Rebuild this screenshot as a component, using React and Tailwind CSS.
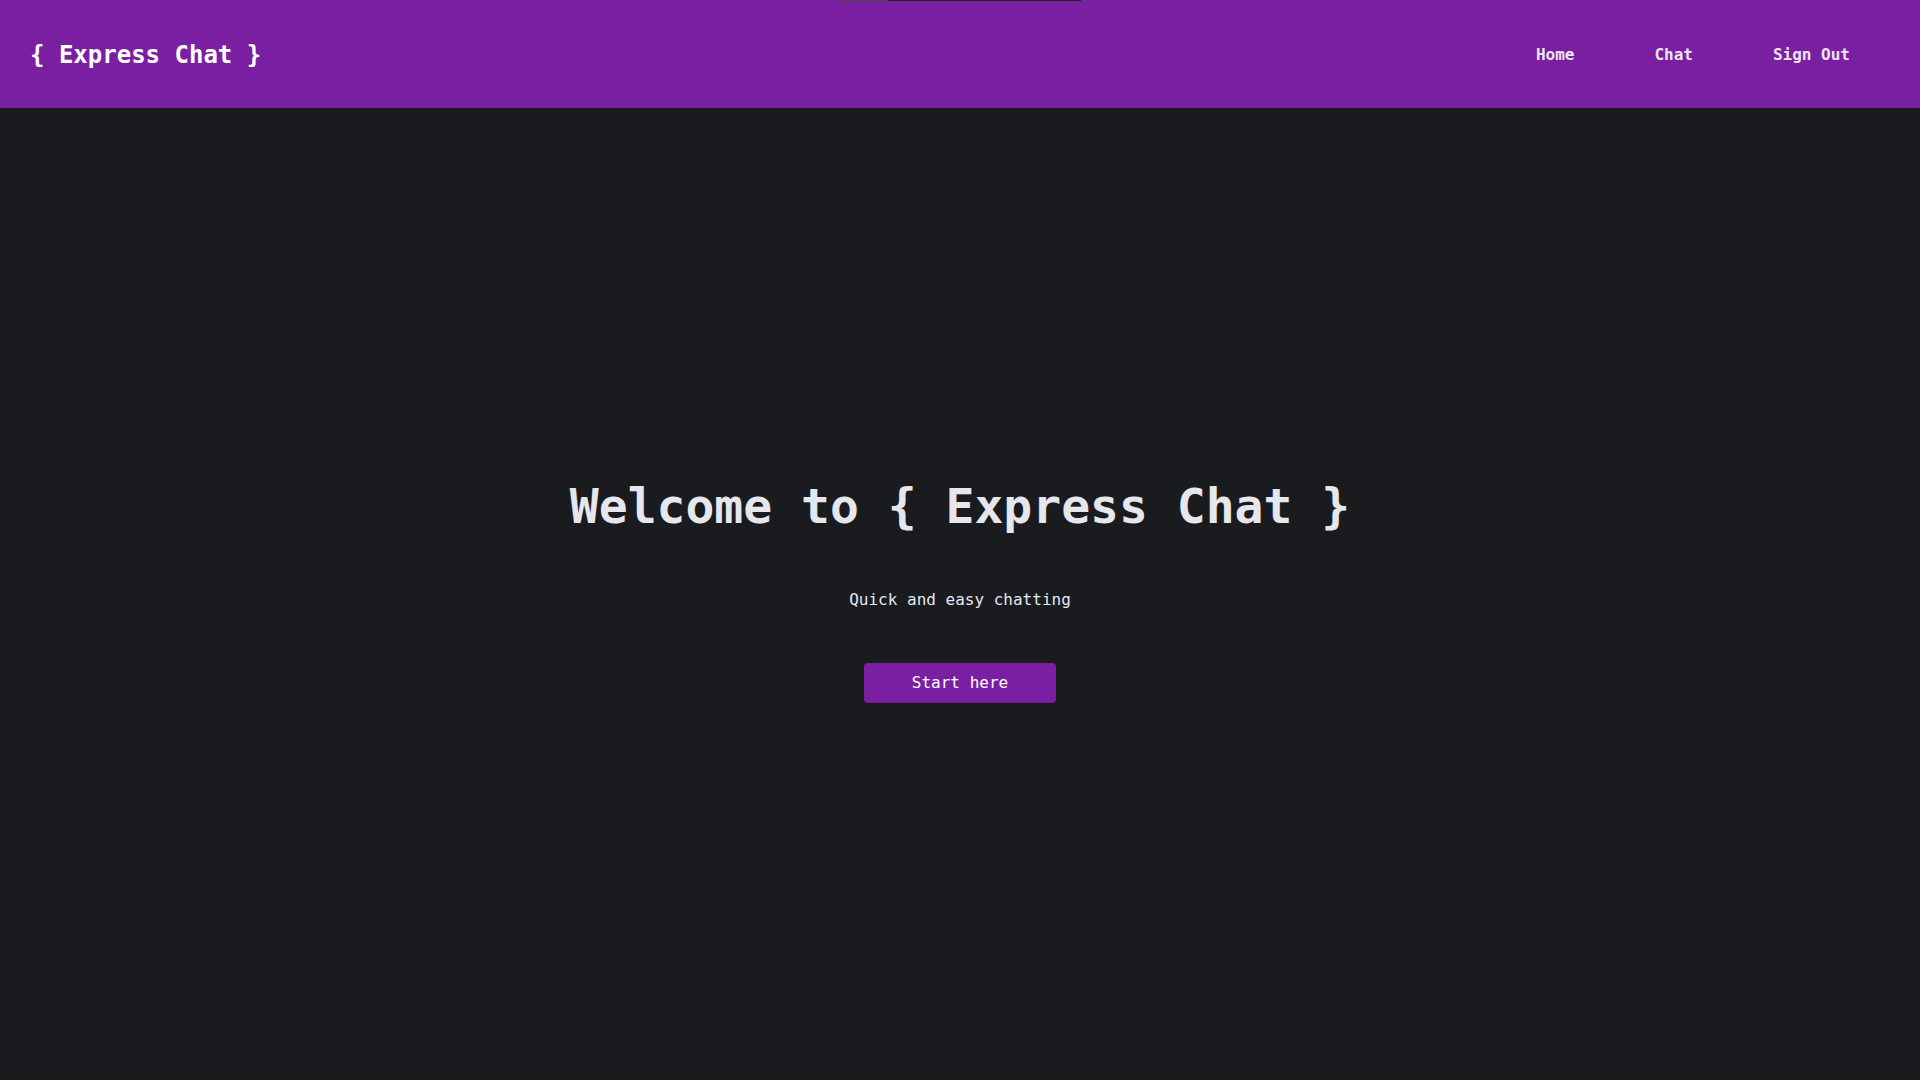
const mono = { fontFamily: '"DejaVu Sans Mono", "Liberation Mono", monospace' }

const NavLink = ({ children }) => (
  <a href="#" className="px-10 text-base font-bold text-[#ece4f3]">
    {children}
  </a>
)

export default function App() {
  return (
    <div className="min-h-screen flex flex-col bg-[#1a1b1e] relative" style={mono}>
      <div className="absolute top-0 left-[840px] flex h-px">
        <div className="w-12 bg-[#4b4b4b]"></div>
        <div className="w-[193px] bg-[#222222]"></div>
      </div>

      <header className="h-[108px] bg-[#7b1fa2] flex items-center justify-between px-[30px] pt-[2px]">
        <a href="#" className="text-2xl font-bold text-white">
          {"{ Express Chat }"}
        </a>
        <nav className="flex items-center">
          <NavLink>Home</NavLink>
          <NavLink>Chat</NavLink>
          <NavLink>Sign Out</NavLink>
        </nav>
      </header>

      <main className="flex-1 flex flex-col items-center justify-center pb-[7px]">
        <h1 className="text-5xl leading-[1.2] font-bold text-[#e6e7ec]">
          {"Welcome to { Express Chat }"}
        </h1>
        <p className="mt-[52px] text-base leading-6 text-[#e3e8f2]">
          Quick and easy chatting
        </p>
        <button className="mt-[51px] w-48 h-10 rounded bg-[#7b1fa2] text-base text-white">
          Start here
        </button>
      </main>
    </div>
  )
}
